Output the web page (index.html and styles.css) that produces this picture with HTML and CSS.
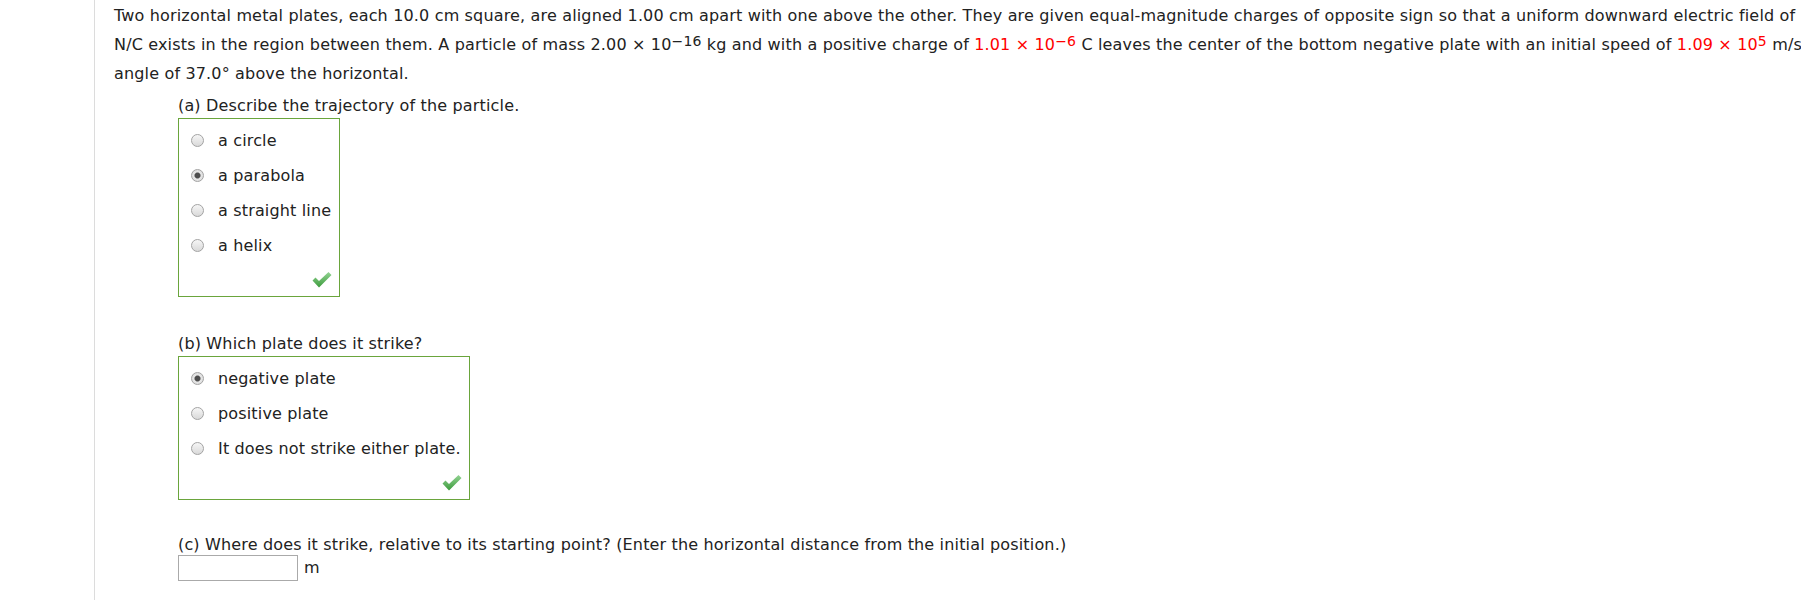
FILE: index.html
```html
<!DOCTYPE html>
<html lang="en">
<head>
<meta charset="utf-8">
<title>Question</title>
<link rel="stylesheet" href="styles.css">
</head>
<body>
<div class="page">
  <div class="gutter"></div>
  <div class="main">
    <p class="question">
      <span class="line">Two horizontal metal plates, each 10.0 cm square, are aligned 1.00 cm apart with one above the other. They are given equal-magnitude charges of opposite sign so that a uniform downward electric field of</span>
      <span class="line">N/C exists in the region between them. A particle of mass 2.00 &times; 10<sup>&minus;16</sup> kg and with a positive charge of <span class="val">1.01 &times; 10<sup>&minus;6</sup></span> C leaves the center of the bottom negative plate with an initial speed of <span class="val">1.09 &times; 10<sup>5</sup></span> m/s</span>
      <span class="line">angle of 37.0&deg; above the horizontal.</span>
    </p>

    <div class="part">
      <div class="prompt">(a) Describe the trajectory of the particle.</div>
      <div class="choices">
        <div class="choice"><span class="radio"></span><span>a circle</span></div>
        <div class="choice"><span class="radio on"></span><span>a parabola</span></div>
        <div class="choice"><span class="radio"></span><span>a straight line</span></div>
        <div class="choice"><span class="radio"></span><span>a helix</span></div>
        <div class="mark">
          <svg width="20" height="16" viewBox="0 0 20 16"><defs><linearGradient id="ga" x1="0" y1="0" x2="0" y2="1"><stop offset="0" stop-color="#92d392"/><stop offset="1" stop-color="#3c9b3c"/></linearGradient></defs><path d="M0.5 8.5 L3.5 5.5 L7 9 L16.5 0 L19.5 3 L7 15.5 Z" fill="url(#ga)"/></svg>
        </div>
      </div>
    </div>

    <div class="part">
      <div class="prompt">(b) Which plate does it strike?</div>
      <div class="choices">
        <div class="choice"><span class="radio on"></span><span>negative plate</span></div>
        <div class="choice"><span class="radio"></span><span>positive plate</span></div>
        <div class="choice"><span class="radio"></span><span>It does not strike either plate.</span></div>
        <div class="mark">
          <svg width="20" height="16" viewBox="0 0 20 16"><defs><linearGradient id="gb" x1="0" y1="0" x2="0" y2="1"><stop offset="0" stop-color="#92d392"/><stop offset="1" stop-color="#3c9b3c"/></linearGradient></defs><path d="M0.5 8.5 L3.5 5.5 L7 9 L16.5 0 L19.5 3 L7 15.5 Z" fill="url(#gb)"/></svg>
        </div>
      </div>
    </div>

    <div class="part part-last">
      <div class="prompt">(c) Where does it strike, relative to its starting point? (Enter the horizontal distance from the initial position.)</div>
      <div class="answer">
        <input class="field" type="text">
        <span class="unit">m</span>
      </div>
    </div>
  </div>
</div>
</body>
</html>
```
FILE: styles.css
```css
html, body {
  margin: 0;
  padding: 0;
  background: #ffffff;
  overflow: hidden;
}

body {
  font-family: "DejaVu Sans", Verdana, sans-serif;
  font-size: 16px;
  letter-spacing: 0.16px;
  color: #222222;
}

.page {
  display: flex;
  min-height: 600px;
}

.gutter {
  width: 94px;
  flex: none;
}

.main {
  flex: 1;
  border-left: 1px solid #dcdcdc;
  padding: 1px 0 0 19px;
  min-width: 0;
}

.question {
  margin: 0;
  line-height: 29px;
}

.line {
  display: block;
  white-space: nowrap;
}

sup {
  font-size: 14px;
  line-height: 0;
  vertical-align: 4px;
}

.val {
  color: #ff0000;
}

.part {
  margin-left: 64px;
  margin-top: 37px;
}

.part:first-of-type {
  margin-top: 8px;
}

.part-last {
  margin-top: 35px;
}

.prompt {
  line-height: 20px;
  white-space: nowrap;
  margin-bottom: 2px;
}

.part-last .prompt {
  margin-bottom: 0;
}

.choices {
  display: inline-block;
  border: 1px solid #6aa53c;
  padding: 4px 8px 0 12px;
}

.choice {
  display: flex;
  align-items: center;
  gap: 14px;
  height: 35px;
  white-space: nowrap;
}

.radio {
  flex: none;
  width: 13px;
  height: 13px;
  box-sizing: border-box;
  border-radius: 50%;
  border: 1px solid #a3a3a3;
  background: linear-gradient(#f6f6f6, #d9d9d9);
}

.radio.on {
  background: radial-gradient(circle, #4d4d4d 0, #4d4d4d 2.4px, #9a9a9a 3px, #e6e6e6 3.6px, #d6d6d6 100%);
}

.mark {
  height: 33px;
  display: flex;
  align-items: center;
  justify-content: flex-end;
  margin-right: -1px;
}

.mark svg {
  display: block;
}

.answer {
  display: flex;
  align-items: center;
  gap: 6px;
}

.field {
  width: 120px;
  height: 26px;
  box-sizing: border-box;
  border: 1px solid #aaaaaa;
  padding: 0;
  margin: 0;
  font: inherit;
}

.unit {
  line-height: 20px;
}
```
